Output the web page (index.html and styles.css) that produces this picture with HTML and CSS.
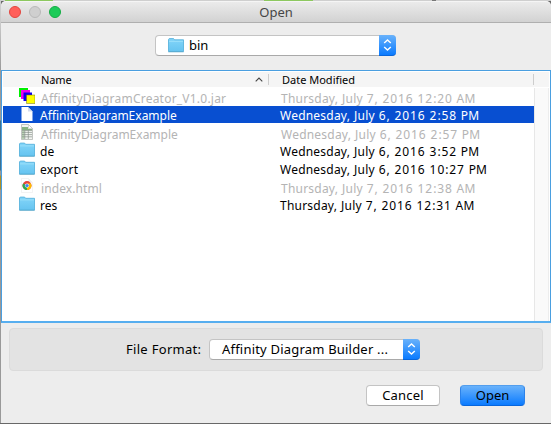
FILE: index.html
```html
<!DOCTYPE html>
<html lang="en">
<head>
<meta charset="utf-8">
<title>Open</title>
<link rel="stylesheet" href="styles.css">
</head>
<body>
<svg class="defs" width="0" height="0" aria-hidden="true">
  <defs>
    <linearGradient id="fold" x1="0" y1="0" x2="0" y2="1"><stop offset="0" stop-color="#83d5f9"/><stop offset="1" stop-color="#66c4f0"/></linearGradient>
    <symbol id="folder" viewBox="0 0 16 15">
      <path d="M.5 13.5V1.3L1.2.6H5.6L6.6 1.8H15.5V13.5Z" fill="url(#fold)" stroke="#5ab3dc" stroke-width=".9"/>
      <path d="M1 3.4H15" stroke="#a2e2fb" stroke-width=".8"/>
      <path d="M.3 13.9H15.7" stroke="#4c9dc2" stroke-width=".6"/>
    </symbol>
    <symbol id="jar" viewBox="0 0 16 16">
      <path d="M0 0H9V9H0Z" fill="#00f000"/><path d="M2 2H11V11H2Z" fill="#f000f0"/><path d="M4.5 4.5H13V13H4.5Z" fill="#1000e8"/><path d="M7.5 7H16V15.5H7.5Z" fill="#ff0" stroke="#6b6b20" stroke-width=".5"/>
    </symbol>
    <symbol id="doc" viewBox="0 0 16 16">
      <path d="M2.5 1H9L13.5 5.5V15H2.5Z" fill="#fff"/><path d="M9 1V5.5H13.5Z" fill="#d5dcec"/>
    </symbol>
    <symbol id="sheet" viewBox="0 0 16 16">
      <path d="M2.5 .5H9.5L13.5 4.5V15.5H2.5Z" fill="#f2f4f1" stroke="#a9aea9" stroke-width=".7"/>
      <path d="M3 3H9V5H13V6.3H3Z" fill="#87b483"/><path d="M3 6.3H5.5V15H3Z" fill="#b9d2b4"/>
      <path d="M3 8.4H13M3 10.6H13M3 12.8H13M5.8 6.3V15M9.3 6.3V15M3 6.4H13" stroke="#87918a" stroke-width=".7"/>
      <path d="M9.5 .5V4.5H13.5Z" fill="#fff" stroke="#b4b9b4" stroke-width=".5"/>
    </symbol>
    <symbol id="chrome" viewBox="0 0 16 16">
      <path d="M2.5 .5H9.5L13.5 4.5V14.5H2.5Z" fill="#fff" stroke="#e6e6e6" stroke-width=".5"/><path d="M9.5 .5V4.5H13.5Z" fill="#eee"/>
      <circle cx="8" cy="7.6" r="4.5" fill="#e8453c"/><path d="M8 7.6L4.1 5.4A4.5 4.5 0 0 0 8 12.1Z" fill="#2da94f"/><path d="M8 12.1A4.5 4.5 0 0 0 12 5.6H8V7.6Z" fill="#fdbd00"/>
      <circle cx="8" cy="7.6" r="2.1" fill="#fff"/><circle cx="8" cy="7.6" r="1.7" fill="#4086f4"/>
    </symbol>
    <symbol id="updown" viewBox="0 0 17 20">
      <path d="M5.2 8.1L8.5 5L11.8 8.1M5.2 12L8.5 15.1L11.8 12" fill="none" stroke="#fff" stroke-width="1.4"/>
    </symbol>
  </defs>
</svg>
<div class="screen">
  <div class="behind"><i class="b1"></i><i class="b2"></i><i class="b3"></i></div>
  <div class="edge"></div>
  <main class="window">
    <header class="titlebar">
      <div class="lights"><span class="light red"></span><span class="light off"></span><span class="light green"></span></div>
      <h1><span class="t-title">Open</span></h1>
    </header>
    <div class="path">
      <div class="combo dir"><svg class="ficon"><use href="#folder"/></svg><span class="value t-bin">bin</span><span class="arrows"><svg><use href="#updown"/></svg></span></div>
    </div>
    <section class="list">
      <div class="thead">
        <span class="h-name">Name</span>
        <svg class="sort" viewBox="0 0 8 5"><path d="M.7 4.3L4 1L7.3 4.3" fill="none" stroke="#444" stroke-width="1.1"/></svg>
        <i class="sep"></i><span class="h-date">Date Modified</span><i class="sep end"></i>
      </div>
      <div class="body">
        <div class="rows">
          <div class="row dim"><svg><use href="#jar"/></svg><span class="name n1">AffinityDiagramCreator_V1.0.jar</span><span class="date">Thursday, July <span class="num">7, 2016 12:20</span> AM</span></div>
          <div class="row sel"><svg><use href="#doc"/></svg><span class="name">AffinityDiagramExample</span><span class="date">Wednesday, July <span class="num">6, 2016 2:58</span> PM</span></div>
          <div class="row dim"><svg><use href="#sheet"/></svg><span class="name">AffinityDiagramExample</span><span class="date">Wednesday, July <span class="num">6, 2016 2:57</span> PM</span></div>
          <div class="row"><svg><use href="#folder"/></svg><span class="name">de</span><span class="date">Wednesday, July <span class="num">6, 2016 3:52</span> PM</span></div>
          <div class="row"><svg><use href="#folder"/></svg><span class="name n5">export</span><span class="date">Wednesday, July <span class="num">6, 2016 10:27</span> PM</span></div>
          <div class="row dim"><svg><use href="#chrome"/></svg><span class="name n6">index.html</span><span class="date">Thursday, July <span class="num">7, 2016 12:38</span> AM</span></div>
          <div class="row"><svg><use href="#folder"/></svg><span class="name">res</span><span class="date">Thursday, July <span class="num">7, 2016 12:31</span> AM</span></div>
        </div>
        <div class="track"></div>
      </div>
    </section>
    <section class="format">
      <label class="t-label">File Format:</label>
      <div class="combo kind"><span class="value t-kind">Affinity Diagram Builder ...</span><span class="arrows"><svg><use href="#updown"/></svg></span></div>
    </section>
    <footer class="actions"><button class="cancel">Cancel</button><button class="open">Open</button></footer>
  </main>
</div>
</body>
</html>
```
FILE: styles.css
```css
* { box-sizing: border-box; }
body { margin: 0; font-family: "Noto Sans", "Open Sans", sans-serif; font-size: 12px; color: #000; overflow: hidden; }
.defs { position: absolute; }
svg { display: block; flex: none; }
span, label { white-space: pre; }
.screen { width: 551px; height: 424px; display: grid; grid-template: 1px 422px 1px / 1px 550px; background: #686868; }
.behind { grid-column: 1 / 3; background: #cfcfcf; display: flex; }
.behind i { height: 1px; background: #8dc860; }
.b1 { margin-left: 5px; width: 48px; }
.b2 { margin-left: 211px; width: 49px; }
.behind .b3 { margin-left: 119px; width: 4px; background: #777; }
.edge { background: linear-gradient(#ccc 0 20px, #999 70px 119px, #3e7190 120px 169px, #999 170px 174px, #ad9027 175px 188px, #999 189px); }
.window { background: linear-gradient(#ccc 0 10px, #ededed 10px); border-radius: 5px 5px 0 0; display: flex; flex-direction: column; }
.titlebar { height: 22px; flex: none; display: grid; grid-template-columns: 60px 430px 60px; align-items: center; border-radius: 5px 5px 0 0; background: linear-gradient(#ebebeb, #d2d2d2); border-top: 1px solid #f5f5f5; border-bottom: 1px solid #afafaf; }
.lights { display: flex; gap: 8px; padding-left: 8px; }
.light { width: 12px; height: 12px; border-radius: 50%; border: 1px solid; }
.red { background: #ff5f5a; border-color: #e2463f; }
.off { background: #cfcfcf; border-color: #b9b9b9; }
.green { background: #1ccb58; border-color: #14ac43; }
h1 { margin: 0; font: inherit; font-size: 13px; line-height: 18px; text-align: center; color: #464646; }
.path { height: 47px; flex: none; padding: 12px 0 0 154px; }
.combo { height: 21px; display: flex; align-items: center; background: #fff; border: 1px solid #c4c4c4; border-bottom-color: #a9a9a9; border-radius: 4px; }
.dir { width: 241px; }
.dir .ficon { width: 16px; height: 15px; margin-left: 12px; }
.value { flex: 1; font-size: 13px; line-height: 19px; }
.t-bin { margin-left: 5px; }
.arrows { width: 17px; height: 21px; margin: -1px -1px -1px 0; border-radius: 0 4px 4px 0; background: linear-gradient(#69b2fb, #0b7bff); border-bottom: 1px solid #0866dc; }
.arrows svg { width: 17px; height: 20px; }
.list { height: 253px; flex: none; border: 1px solid #4a9fe0; border-bottom: 2px solid #57aeef; background: #fff; padding: 1px 1px 0; display: flex; flex-direction: column; }
.thead { height: 15px; flex: none; display: flex; align-items: center; background: #f5f5f5; font-size: 11px; line-height: 15px; padding: 0 0 1px 38px; }
.h-name { width: 214px; flex: none; letter-spacing: -.1px; }
.sort { width: 8px; height: 5px; }
.sep { width: 1px; height: 11px; background: #cdcdcd; margin-left: 5px; flex: none; }
.h-date { width: 251px; margin-left: 13px; flex: none; }
.thead .end { margin-left: 0; }
.body { flex: 1; display: flex; margin-top: 1px; }
.rows { width: 531px; }
.row { height: 18px; display: grid; grid-template-columns: 21px 240px 1fr; padding-left: 16px; line-height: 19px; align-items: start; }
.row svg { width: 16px; height: 16px; }
.sel { background: linear-gradient(#084fd1 17px, #fff 17px); color: #fff; }
.n1 { letter-spacing: .22px; }
.n5 { letter-spacing: .25px; }
.n6 { letter-spacing: .1px; }
.date { letter-spacing: .22px; word-spacing: .5px; }
.num { letter-spacing: .9px; word-spacing: 0; }
.dim .name, .dim .date { color: #b4b4b4; position: relative; left: 1px; top: 1px; }
.track { width: 15px; background: #fafafa; border-left: 1px solid #e7e7e7; border-right: 1px solid #ededed; }
.format { width: 534px; height: 43px; flex: none; margin: 5px 0 0 8px; border: 1px solid #dbdbdb; border-radius: 4px; background: #e3e3e3; display: flex; align-items: center; padding-bottom: 1px; }
.t-label { width: 83px; margin-left: 116px; font-size: 13px; letter-spacing: .3px; }
.kind { width: 211px; }
.t-kind { margin-left: 12px; letter-spacing: .2px; }
.actions { display: flex; justify-content: flex-end; gap: 20px; padding: 14px 26px 0 0; }
button { font: inherit; font-size: 13px; line-height: 18px; height: 21px; padding: 0 0 1px; border-radius: 4px; border: 1px solid #c4c4c4; border-bottom-color: #a9a9a9; background: #fff; color: #000; }
.cancel { width: 74px; letter-spacing: .2px; }
.open { width: 65px; background: linear-gradient(#69b2fb, #0b7bff); border-color: #539eed #2c82e9 #0866dc; }
```
